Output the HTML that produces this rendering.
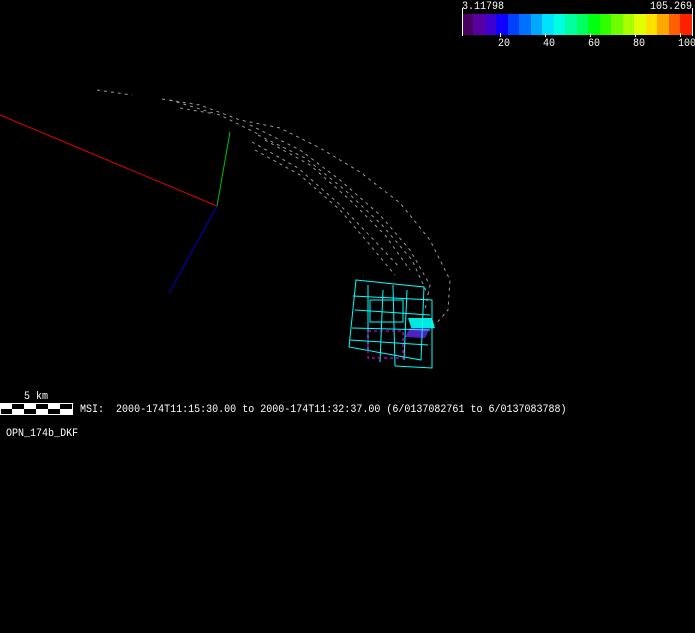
<!DOCTYPE html>
<html><head><style>
body{margin:0;background:#000;width:695px;height:633px;overflow:hidden;position:relative;font-family:"Liberation Mono","DejaVu Sans Mono",monospace;font-size:11px;color:#fff}
.t{position:absolute;white-space:pre;line-height:12px;transform:scaleX(0.91);transform-origin:0 0}
</style></head><body>
<svg width="695" height="633" style="position:absolute;left:0;top:0">
<g shape-rendering="crispEdges">
<rect x="462" y="14" width="11" height="21" fill="#4a0060"/>
<rect x="473" y="14" width="12" height="21" fill="#5a00a0"/>
<rect x="485" y="14" width="11" height="21" fill="#4000d0"/>
<rect x="496" y="14" width="12" height="21" fill="#1000ff"/>
<rect x="508" y="14" width="11" height="21" fill="#0040ff"/>
<rect x="519" y="14" width="12" height="21" fill="#0070ff"/>
<rect x="531" y="14" width="11" height="21" fill="#00a8ff"/>
<rect x="542" y="14" width="12" height="21" fill="#00e0ff"/>
<rect x="554" y="14" width="11" height="21" fill="#00ffe0"/>
<rect x="565" y="14" width="12" height="21" fill="#00ffa0"/>
<rect x="577" y="14" width="11" height="21" fill="#00ff60"/>
<rect x="588" y="14" width="12" height="21" fill="#00ff10"/>
<rect x="600" y="14" width="11" height="21" fill="#30ff00"/>
<rect x="611" y="14" width="12" height="21" fill="#70ff00"/>
<rect x="623" y="14" width="11" height="21" fill="#a8ff00"/>
<rect x="634" y="14" width="12" height="21" fill="#e0ff00"/>
<rect x="646" y="14" width="11" height="21" fill="#ffe000"/>
<rect x="657" y="14" width="12" height="21" fill="#ffa800"/>
<rect x="669" y="14" width="11" height="21" fill="#ff6000"/>
<rect x="680" y="14" width="13" height="21" fill="#ff2000"/>
<rect x="462" y="8" width="1" height="28" fill="#fff"/>
<rect x="692" y="8" width="1" height="28" fill="#fff"/>
<rect x="500" y="33" width="1" height="4" fill="#fff"/>
<rect x="545" y="33" width="1" height="4" fill="#fff"/>
<rect x="590" y="33" width="1" height="4" fill="#fff"/>
<rect x="635" y="33" width="1" height="4" fill="#fff"/>
<rect x="680" y="33" width="1" height="4" fill="#fff"/>
<rect x="0" y="403" width="73" height="1" fill="#fff"/>
<rect x="0" y="414" width="73" height="1" fill="#fff"/>
<rect x="0" y="403" width="1" height="12" fill="#fff"/>
<rect x="72" y="403" width="1" height="12" fill="#fff"/>
<rect x="0" y="403" width="12" height="6" fill="#fff"/><rect x="24" y="403" width="12" height="6" fill="#fff"/><rect x="48" y="403" width="12" height="6" fill="#fff"/>
<rect x="12" y="409" width="12" height="6" fill="#fff"/><rect x="36" y="409" width="12" height="6" fill="#fff"/><rect x="60" y="409" width="12" height="6" fill="#fff"/>
</g>
<line x1="0" y1="115" x2="217" y2="206" stroke="#e00000"/>
<line x1="217" y1="206" x2="230" y2="132" stroke="#00c000"/>
<line x1="217" y1="206" x2="169" y2="293" stroke="#0000d0"/>
<g fill="none" stroke="#999" stroke-dasharray="3 4">
<path d="M97 90 L132 95"/>
<path d="M162 99 L200 105 L240 120 L280 128 L320 148 L360 172 L400 203 L430 240 L450 280 L448 310 L435 325"/>
<path d="M250 125 L300 150 L340 180 L380 215 L410 250 L430 285 L425 310"/>
<path d="M265 140 L310 165 L350 200 L385 235 L410 270"/>
<path d="M255 150 L300 175 L340 210 L370 245 L395 275"/>
<path d="M258 135 L305 158 L345 190 L382 225 L412 260 L428 295"/>
<path d="M252 142 L298 168 L338 203 L372 238 L400 268"/>
<path d="M170 100 L220 115 L260 135"/>
<path d="M180 108 L215 114"/>
</g>
<polygon points="408,318 432,318 435,328 412,330" fill="#00e8e0"/>
<polygon points="410,328 430,328 425,338 405,337" fill="#5020c0"/>
<g fill="none" stroke="#00ffff">
<path d="M356 280 L424 287 L421 360 L349 347 Z"/>
<path d="M353 296 L432 300 L432 368 L395 366"/>
<path d="M368 285 L368 350 M383 290 L380 362 M393 285 L395 366 M407 290 L404 360"/>
<path d="M355 310 L430 315 M352 328 L430 330 M350 340 L428 345"/>
<path d="M370 300 L403 300 L403 322 L370 322 Z"/>
</g>
<rect x="368" y="331" width="35" height="27" fill="none" stroke="#ff00ff" stroke-dasharray="3 3"/>
</svg>
<div class="t" style="left:462px;top:1px">3.11798</div>
<div class="t" style="left:650px;top:1px">105.269</div>
<div class="t" style="left:498px;top:38px">20</div>
<div class="t" style="left:543px;top:38px">40</div>
<div class="t" style="left:588px;top:38px">60</div>
<div class="t" style="left:633px;top:38px">80</div>
<div class="t" style="left:678px;top:38px">100</div>
<div class="t" style="left:24px;top:391px">5 km</div>
<div class="t" style="left:80px;top:404px">MSI:  2000-174T11:15:30.00 to 2000-174T11:32:37.00 (6/0137082761 to 6/0137083788)</div>
<div class="t" style="left:6px;top:428px">OPN_174b_DKF</div>
</body></html>
